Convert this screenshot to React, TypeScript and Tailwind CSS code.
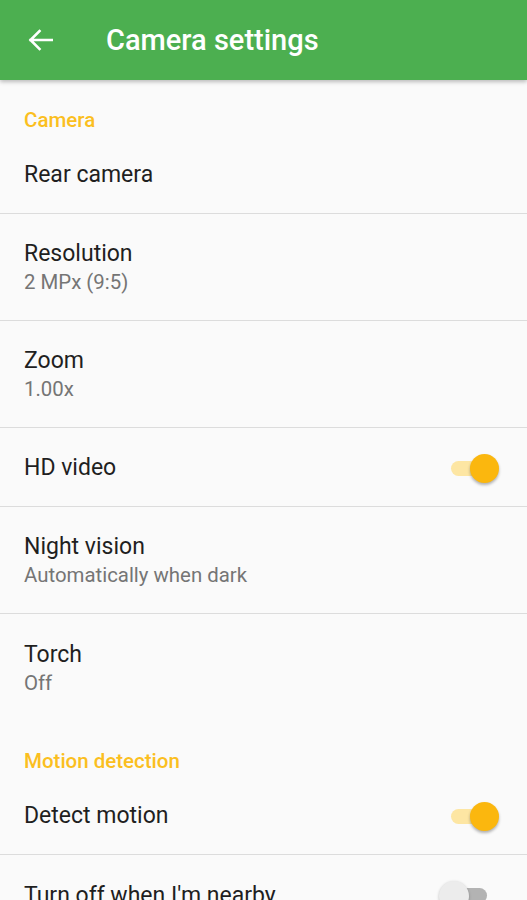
import React from "react";

type Row = {
	title: string;
	summary?: string;
	toggle?: "on" | "off";
	divider?: boolean;
};

const cameraRows: Row[] = [
	{ title: "Rear camera", divider: true },
	{ title: "Resolution", summary: "2 MPx (9:5)", divider: true },
	{ title: "Zoom", summary: "1.00x", divider: true },
	{ title: "HD video", toggle: "on", divider: true },
	{ title: "Night vision", summary: "Automatically when dark", divider: true },
	{ title: "Torch", summary: "Off" },
];

const motionRows: Row[] = [
	{ title: "Detect motion", toggle: "on", divider: true },
	{ title: "Turn off when I'm nearby", toggle: "off" },
];

const Switch = ({ on }: { on: boolean }) =>
	on ? (
		<div className="relative w-[48px] h-[30px] mr-[28px] shrink-0">
			<div className="absolute left-0 right-[9px] top-[8px] h-[15px] rounded-full bg-[#fde6a3]" />
			<div className="absolute right-0 top-[1px] w-[29px] h-[29px] rounded-full bg-[#fbb70e] shadow-[0_2px_3px_rgba(0,0,0,0.3)]" />
		</div>
	) : (
		<div className="relative w-[48px] h-[30px] mr-[40px] shrink-0">
			<div className="absolute left-[9px] right-0 top-[8px] h-[15px] rounded-full bg-[#b3b3b3]" />
			<div className="absolute left-0 top-[1px] w-[30px] h-[30px] rounded-full bg-[#ececec] shadow-[0_1px_3px_rgba(0,0,0,0.25)]" />
		</div>
	);

const PrefRow = ({ row }: { row: Row }) => (
	<div
		className={`flex items-center justify-between pl-[24px] ${
			row.summary ? "h-[107px] pt-[2px]" : "h-[79px] pt-[1px]"
		} ${row.divider ? "border-b border-[#dcdcdc]" : ""}`}
	>
		<div className="flex flex-col">
			<div className="text-[23px] leading-[29px] text-[#1f1f1f]">{row.title}</div>
			{row.summary && (
				<div className="text-[20.4px] leading-[29px] text-[#757575]">{row.summary}</div>
			)}
		</div>
		{row.toggle && <Switch on={row.toggle === "on"} />}
	</div>
);

const Category = ({ label }: { label: string }) => (
	<div className="h-[55px] pl-[24px] pt-[28px] text-[20.5px] leading-[24px] font-medium text-[#fbbf1f]">
		{label}
	</div>
);

export default function App() {
	return (
		<div
			className="w-[527px] h-[900px] overflow-hidden bg-[#fafafa]"
			style={{ fontFamily: "Roboto, 'Noto Sans', sans-serif" }}
		>
			<div className="relative z-10 h-[80px] bg-[#4caf50] flex items-center shadow-[0_2px_4px_rgba(0,0,0,0.25)]">
				<div className="w-[106px] pl-[28px] flex items-center">
					<svg width="25" height="22" viewBox="0 0 25 22" fill="none">
						<path
							d="M24 11H2.5M11.5 2 2.5 11l9 9"
							stroke="#ffffff"
							strokeWidth="2.6"
							strokeLinecap="square"
						/>
					</svg>
				</div>
				<h1 className="text-[29px] font-medium text-white leading-none">Camera settings</h1>
			</div>

			<Category label="Camera" />
			{cameraRows.map((r) => (
				<PrefRow key={r.title} row={r} />
			))}

			<Category label="Motion detection" />
			{motionRows.map((r) => (
				<PrefRow key={r.title} row={r} />
			))}
		</div>
	);
}
